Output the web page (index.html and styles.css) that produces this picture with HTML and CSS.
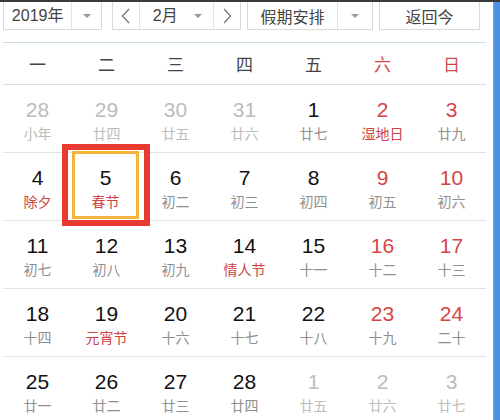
FILE: index.html
```html
<!DOCTYPE html>
<html lang="zh-CN">
<head>
<meta charset="utf-8">
<title>万年历</title>
<link rel="stylesheet" href="styles.css">
</head>
<body>
<div class="topstrip"></div>
<div class="frame">
  <div class="cal">
    <div class="toolbar">
      <div class="box year">
        <span class="label">2019年</span>
        <span class="drop"><i class="tri"></i></span>
      </div>
      <div class="box month">
        <span class="nav"><svg width="9" height="16" viewBox="0 0 9 16"><polyline points="8,1 1.5,8 8,15" fill="none" stroke="#777" stroke-width="1.3"/></svg></span>
        <span class="mid"><span class="label">2月</span><i class="tri"></i></span>
        <span class="nav next"><svg width="9" height="16" viewBox="0 0 9 16"><polyline points="1,1 7.5,8 1,15" fill="none" stroke="#777" stroke-width="1.3"/></svg></span>
      </div>
      <div class="box holiday">
        <span class="label">假期安排</span>
        <span class="drop"><i class="tri"></i></span>
      </div>
      <div class="box today">返回今</div>
    </div>

    <div class="grid head">
      <div>一</div><div>二</div><div>三</div><div>四</div><div>五</div><div class="we">六</div><div class="we">日</div>
    </div>

    <div class="grid row">
      <div class="day off"><b>28</b><span>小年</span></div>
      <div class="day off"><b>29</b><span>廿四</span></div>
      <div class="day off"><b>30</b><span>廿五</span></div>
      <div class="day off"><b>31</b><span>廿六</span></div>
      <div class="day"><b>1</b><span>廿七</span></div>
      <div class="day we fest"><b>2</b><span>湿地日</span></div>
      <div class="day we"><b>3</b><span>廿九</span></div>
    </div>
    <div class="grid row">
      <div class="day fest"><b>4</b><span>除夕</span></div>
      <div class="day fest sel"><b>5</b><span>春节</span><i class="mark"></i></div>
      <div class="day"><b>6</b><span>初二</span></div>
      <div class="day"><b>7</b><span>初三</span></div>
      <div class="day"><b>8</b><span>初四</span></div>
      <div class="day we"><b>9</b><span>初五</span></div>
      <div class="day we"><b>10</b><span>初六</span></div>
    </div>
    <div class="grid row">
      <div class="day"><b>11</b><span>初七</span></div>
      <div class="day"><b>12</b><span>初八</span></div>
      <div class="day"><b>13</b><span>初九</span></div>
      <div class="day fest"><b>14</b><span>情人节</span></div>
      <div class="day"><b>15</b><span>十一</span></div>
      <div class="day we"><b>16</b><span>十二</span></div>
      <div class="day we"><b>17</b><span>十三</span></div>
    </div>
    <div class="grid row">
      <div class="day"><b>18</b><span>十四</span></div>
      <div class="day fest"><b>19</b><span>元宵节</span></div>
      <div class="day"><b>20</b><span>十六</span></div>
      <div class="day"><b>21</b><span>十七</span></div>
      <div class="day"><b>22</b><span>十八</span></div>
      <div class="day we"><b>23</b><span>十九</span></div>
      <div class="day we"><b>24</b><span>二十</span></div>
    </div>
    <div class="grid row">
      <div class="day"><b>25</b><span>廿一</span></div>
      <div class="day"><b>26</b><span>廿二</span></div>
      <div class="day"><b>27</b><span>廿三</span></div>
      <div class="day"><b>28</b><span>廿四</span></div>
      <div class="day off"><b>1</b><span>廿五</span></div>
      <div class="day off"><b>2</b><span>廿六</span></div>
      <div class="day off"><b>3</b><span>廿七</span></div>
    </div>
  </div>
  <div class="bluebar"></div>
</div>
</body>
</html>
```

FILE: styles.css
```css
* { box-sizing: border-box; }
html, body { margin: 0; padding: 0; background: #fff; overflow: hidden; }
body {
  width: 500px;
  height: 420px;
  font-family: "Liberation Sans", "Noto Sans CJK SC", sans-serif;
  color: #222;
}
.topstrip { height: 2px; background: #3a3a3a; }
.frame { display: flex; height: 418px; }
.cal { width: 493px; padding-left: 3px; }
.bluebar {
  width: 7px;
  background: linear-gradient(to right, #6aa8ee 0, #4a90e4 2px, #4a8fe2 100%);
}

/* toolbar */
.toolbar { display: flex; height: 28px; }
.box {
  display: flex;
  align-items: center;
  height: 28px;
  border: 1px solid #dadada;
  border-top: 0;
  background: #fff;
  font-family: "Noto Sans CJK SC", "Liberation Sans", sans-serif;
  font-size: 16px;
  color: #444;
}
.box .label { line-height: 20px; }
.tri {
  display: block;
  width: 0; height: 0;
  border-left: 4px solid transparent;
  border-right: 4px solid transparent;
  border-top: 4px solid #999;
}
.drop {
  height: 100%;
  border-left: 1px solid #e3e3e3;
  display: flex; align-items: center; justify-content: center;
}
.year { width: 99px; margin-right: 10px; }
.year .label { width: 68px; text-align: center; font-family: "Liberation Sans", "Noto Sans CJK SC", sans-serif; }
.year .drop { width: 30px; }
.month { width: 129px; margin-right: 6px; }
.nav {
  height: 100%;
  width: 26px;
  display: flex; align-items: center; justify-content: center;
}
.nav.next { width: 27px; border-left: 1px solid #e3e3e3; }
.mid {
  height: 100%;
  width: 75px;
  border-left: 1px solid #e3e3e3;
  display: flex; align-items: center; justify-content: space-between;
  padding: 0 11px 0 13px;
  font-family: "Liberation Sans", "Noto Sans CJK SC", sans-serif;
}
.holiday { width: 126px; margin-right: 6px; }
.holiday .label { width: 89px; text-align: center; }
.holiday .drop { width: 35px; }
.today { width: 101px; justify-content: center; }

/* grid */
.grid {
  display: grid;
  grid-template-columns: repeat(7, 69px);
  width: 483px;
}
.head {
  margin-top: 12px;
  border-top: 1px solid #cadfe4;
  border-bottom: 1px solid #dcdcdc;
  height: 43px;
  font-family: "Noto Sans CJK SC", sans-serif;
  font-size: 17px;
  color: #444;
}
.head div { text-align: center; line-height: 41px; }
.head .we { color: #d04a4a; }

.row { height: 68px; border-bottom: 1px solid #e2e2e2; }
.day {
  position: relative;
  display: flex;
  flex-direction: column;
  align-items: center;
  padding-top: 13px;
}
.day b {
  font-weight: normal;
  font-size: 21px;
  line-height: 24px;
  color: #111;
}
.day span {
  font-family: "Noto Sans CJK SC", sans-serif;
  font-size: 14px;
  line-height: 20px;
  margin-top: 1px;
  color: #909090;
}
.day.we b { color: #d64545; }
.day.fest span { color: #cc4444; }
.day.off b, .day.off span { color: #bcbcbc; }

.sel {
  border: 3px solid #f2b43a;
  margin: -2px 2px 1px 0;
  padding-top: 12px;
}
.mark {
  position: absolute;
  left: -13px;
  top: -10px;
  width: 88px;
  height: 82px;
  border: 6px solid #e83a30;
  pointer-events: none;
}
```
